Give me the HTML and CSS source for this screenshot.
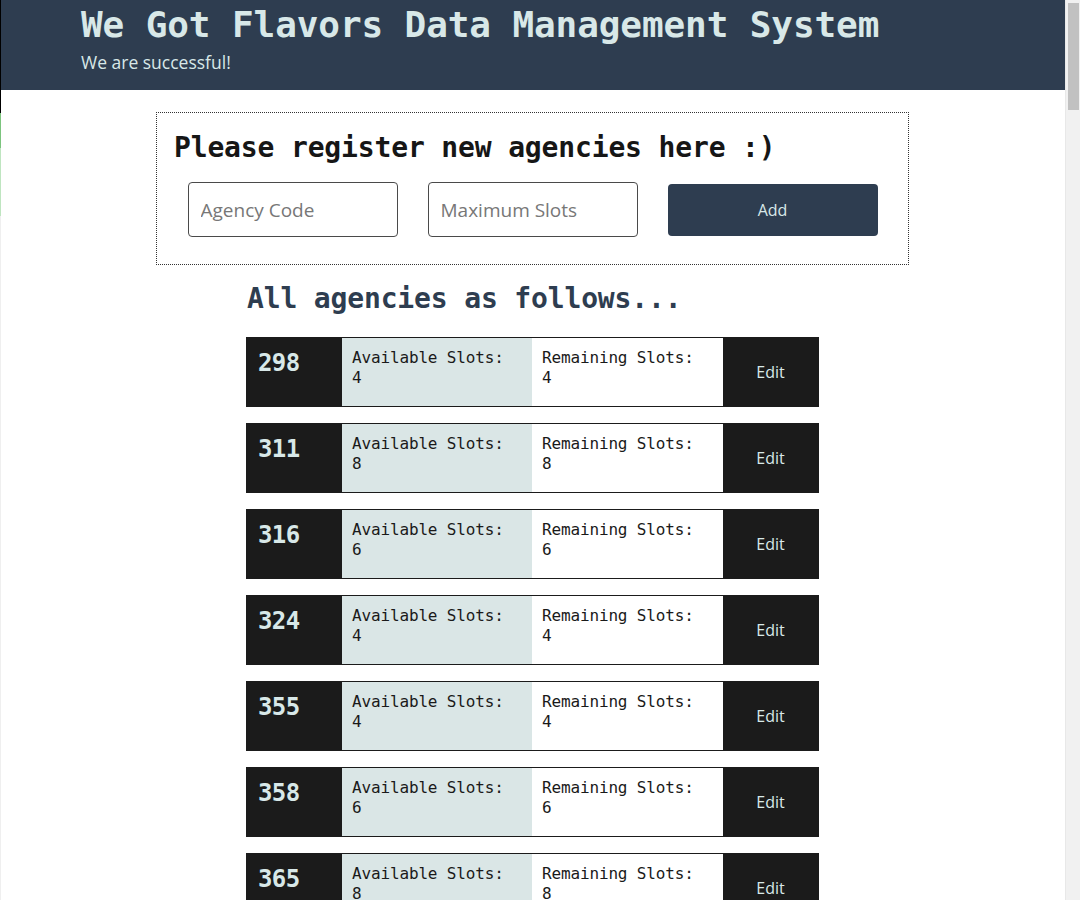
FILE: index.html
```html
<!DOCTYPE html>
<html lang="en">
<head>
<meta charset="utf-8">
<title>We Got Flavors Data Management System</title>
<link rel="stylesheet" href="styles.css">
</head>
<body>
<div class="edge-line"></div>
<div class="scrollbar"><div class="scroll-thumb"></div></div>
<div class="page">
  <header class="topbar">
    <h1 class="title">We Got Flavors Data Management System</h1>
    <p class="subtitle">We are successful!</p>
  </header>
  <main class="content">
    <section class="register">
      <h2 class="register-title">Please register new agencies here :)</h2>
      <form class="register-form">
        <input class="field" type="text" placeholder="Agency Code">
        <input class="field" type="text" placeholder="Maximum Slots">
        <button class="add-btn" type="button">Add</button>
      </form>
    </section>
    <section class="agencies">
      <h2 class="agencies-title">All agencies as follows...</h2>
      <div class="agency-list">
        <div class="agency">
          <div class="code">298</div>
          <div class="slots avail">Available Slots:<br>4</div>
          <div class="slots remain">Remaining Slots:<br>4</div>
          <div class="edit">Edit</div>
        </div>
        <div class="agency">
          <div class="code">311</div>
          <div class="slots avail">Available Slots:<br>8</div>
          <div class="slots remain">Remaining Slots:<br>8</div>
          <div class="edit">Edit</div>
        </div>
        <div class="agency">
          <div class="code">316</div>
          <div class="slots avail">Available Slots:<br>6</div>
          <div class="slots remain">Remaining Slots:<br>6</div>
          <div class="edit">Edit</div>
        </div>
        <div class="agency">
          <div class="code">324</div>
          <div class="slots avail">Available Slots:<br>4</div>
          <div class="slots remain">Remaining Slots:<br>4</div>
          <div class="edit">Edit</div>
        </div>
        <div class="agency">
          <div class="code">355</div>
          <div class="slots avail">Available Slots:<br>4</div>
          <div class="slots remain">Remaining Slots:<br>4</div>
          <div class="edit">Edit</div>
        </div>
        <div class="agency">
          <div class="code">358</div>
          <div class="slots avail">Available Slots:<br>6</div>
          <div class="slots remain">Remaining Slots:<br>6</div>
          <div class="edit">Edit</div>
        </div>
        <div class="agency">
          <div class="code">365</div>
          <div class="slots avail">Available Slots:<br>8</div>
          <div class="slots remain">Remaining Slots:<br>8</div>
          <div class="edit">Edit</div>
        </div>
      </div>
    </section>
  </main>
</div>
</body>
</html>
```

FILE: styles.css
```css
html, body {
  margin: 0;
  padding: 0;
  background: #ffffff;
}

body {
  font-family: "Open Sans", "Liberation Sans", sans-serif;
  color: #1a1a1a;
}

.page {
  margin-right: 15px;
}

.edge-line {
  position: fixed;
  left: 0;
  top: 0;
  width: 1px;
  height: 100%;
  background: linear-gradient(to bottom,
    #000000 0, #000000 113px,
    #7cc47e 113px, #7cc47e 148px,
    #bfe5c0 148px, #bfe5c0 216px,
    #efefef 216px, #efefef 100%);
  z-index: 10;
}

.scrollbar {
  position: fixed;
  top: 0;
  right: 0;
  width: 15px;
  height: 100%;
  background: #f1f1f1;
  border-left: 1px solid #e8e8e8;
  box-sizing: border-box;
  z-index: 10;
}

.scroll-thumb {
  position: absolute;
  top: 3px;
  left: 2px;
  width: 11px;
  height: 107px;
  background: #c1c1c1;
}

.topbar {
  background: #2e3d50;
  height: 90px;
  box-sizing: border-box;
  padding: 3px 0 0 81px;
}

.title {
  margin: 0;
  font-family: "DejaVu Sans Mono", "Liberation Mono", monospace;
  font-weight: bold;
  font-size: 36px;
  line-height: 44px;
  color: #d8e8e8;
  letter-spacing: -0.1px;
}

.subtitle {
  margin: 0;
  font-size: 17.5px;
  line-height: 24px;
  color: #d8e8e8;
  margin-top: 3px;
}

.content {
  padding-top: 22px;
}

.register {
  width: 753px;
  box-sizing: border-box;
  margin: 0 auto;
  border: 1px dotted #333;
  padding: 18px 0 27px;
}

.register-title {
  margin: 0 0 17px 17px;
  font-family: "DejaVu Sans Mono", "Liberation Mono", monospace;
  font-weight: bold;
  font-size: 28px;
  line-height: 34px;
  color: #161616;
  letter-spacing: -0.15px;
}

.register-form {
  display: flex;
  justify-content: center;
  align-items: center;
  gap: 30px;
  margin: 0;
}

.field {
  width: 210px;
  height: 55px;
  box-sizing: border-box;
  border: 1px solid #4a4a4a;
  border-radius: 4px;
  padding: 0 12px;
  font-family: "Open Sans", sans-serif;
  font-size: 19px;
  color: #222;
  background: #fff;
  outline: none;
}

.field::placeholder {
  color: #777777;
}

.add-btn {
  width: 210px;
  height: 52px;
  border: none;
  border-radius: 4px;
  background: #2e3d50;
  color: #d8e8e8;
  font-family: "Open Sans", sans-serif;
  font-size: 16px;
  cursor: pointer;
}

.agencies {
  width: 573px;
  margin: 0 auto;
  padding-top: 16px;
}

.agencies-title {
  margin: 0 0 20px 1px;
  font-family: "DejaVu Sans Mono", "Liberation Mono", monospace;
  font-weight: bold;
  font-size: 28px;
  line-height: 36px;
  color: #2e3d50;
  letter-spacing: -0.15px;
}

.agency-list {
  display: flex;
  flex-direction: column;
  gap: 16px;
  padding-bottom: 16px;
}

.agency {
  display: grid;
  grid-template-columns: 95px 190px 191px 95px;
  height: 70px;
  box-sizing: border-box;
  border: 1px solid #1b1b1b;
}

.code {
  background: #1b1b1b;
  color: #d8e8e8;
  font-family: "DejaVu Sans Mono", "Liberation Mono", monospace;
  font-weight: bold;
  font-size: 24px;
  line-height: 28px;
  padding: 11px 0 0 11px;
  letter-spacing: -0.6px;
}

.slots {
  font-family: "DejaVu Sans Mono", "Liberation Mono", monospace;
  font-size: 16px;
  line-height: 20px;
  padding: 10px 0 0 10px;
  color: #1a1a1a;
  letter-spacing: -0.15px;
}

.avail {
  background: #dae6e6;
}

.remain {
  background: #ffffff;
}

.edit {
  background: #1b1b1b;
  color: #d8e8e8;
  display: flex;
  align-items: center;
  justify-content: center;
  font-size: 16px;
}
```
